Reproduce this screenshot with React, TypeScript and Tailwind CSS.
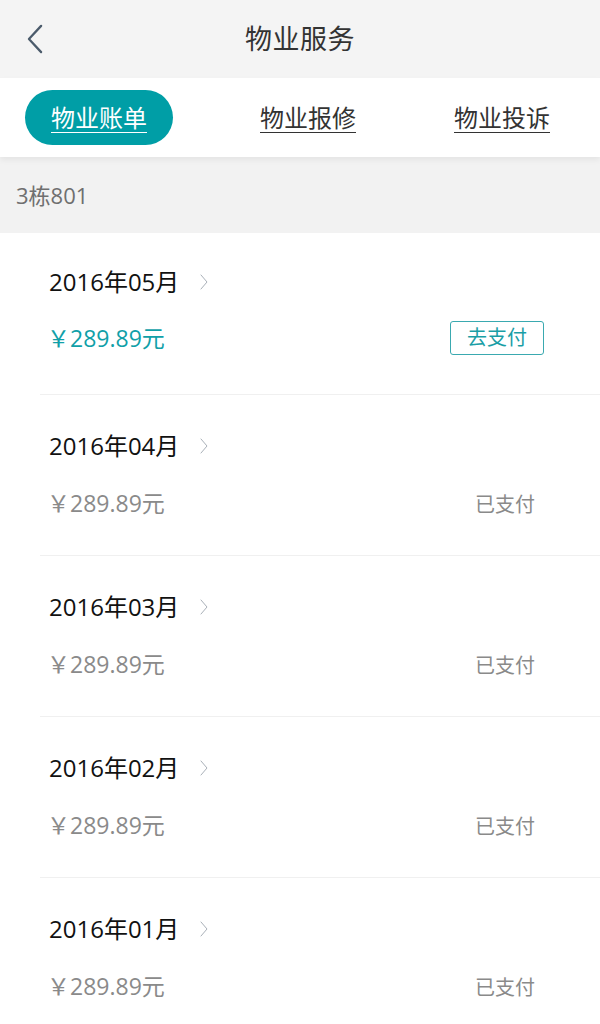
const FONT = "font-['Open_Sans','Noto_Sans_CJK_SC',sans-serif]";

interface Bill {
  month: string;
  amount: string;
  paid: boolean;
}

const BILLS: Bill[] = [
  { month: "2016年05月", amount: "289.89", paid: false },
  { month: "2016年04月", amount: "289.89", paid: true },
  { month: "2016年03月", amount: "289.89", paid: true },
  { month: "2016年02月", amount: "289.89", paid: true },
  { month: "2016年01月", amount: "289.89", paid: true },
];

function Chevron({ dir, className }: { dir: "left" | "right"; className?: string }) {
  return (
    <svg viewBox="0 0 20 32" className={className} fill="none">
      {dir === "left" ? (
        <polyline points="16,2 3,16 16,30" stroke="currentColor" strokeWidth="2.4" strokeLinecap="round" strokeLinejoin="round" />
      ) : (
        <polyline points="4,2 16,16 4,30" stroke="currentColor" strokeWidth="2" strokeLinecap="round" strokeLinejoin="round" />
      )}
    </svg>
  );
}

export default function App() {
  return (
    <main className={`min-h-screen bg-white ${FONT}`}>
      {/* 顶栏 */}
      <header className="h-[78px] bg-[#f4f4f4] grid grid-cols-[80px_1fr_80px] items-center">
        <button type="button" className="pl-[26px] text-[#4b5b6b]">
          <Chevron dir="left" className="w-[19px] h-[30px]" />
        </button>
        <h1 className="text-center text-[27px] text-[#333] tracking-[0.5px]">物业服务</h1>
        <span />
      </header>

      {/* 标签栏 */}
      <nav className="relative z-10 h-[79px] bg-white flex items-center pl-[25px] shadow-[0_3px_6px_rgba(0,0,0,0.06)]">
        <span className="w-[148px] h-[55px] rounded-full bg-[#009ea6] flex items-center justify-center text-white text-[24px] underline underline-offset-[5px] decoration-1">
          物业账单
        </span>
        <span className="ml-[87px] text-[24px] text-[#333] underline underline-offset-[5px] decoration-1">物业报修</span>
        <span className="ml-[98px] text-[24px] text-[#333] underline underline-offset-[5px] decoration-1">物业投诉</span>
      </nav>

      {/* 房号 */}
      <div className="h-[76px] bg-[#f2f2f2] flex items-center pl-[16px] text-[22px] text-[#6f6f6f]">3栋801</div>

      {/* 账单列表 */}
      <ul className="ml-10">
        {BILLS.map((bill, i) => (
          <li
            key={bill.month}
            className={`h-[161px] pl-[9px] pr-[56px] flex flex-col ${i > 0 ? "pt-[35px] border-t border-[#f0f0f0]" : "pt-[33px]"}`}
          >
            <div className="h-[32px] flex items-center gap-[20px] text-[24px] text-[#111]">
              <span>{bill.month}</span>
              <Chevron dir="right" className="w-[10px] h-[16px] text-[#a9b0b8]" />
            </div>
            <div className={`h-[34px] flex items-center justify-between ${i > 0 ? "mt-[24px]" : "mt-[23px]"}`}>
              <span className={`-ml-[2px] text-[23px] ${bill.paid ? "text-[#8a8a8a]" : "text-[#10a0a8]"}`}>
                ￥{bill.amount}元
              </span>
              {bill.paid ? (
                <span className="mr-[9px] mt-[3px] text-[20px] text-[#8a8a8a]">已支付</span>
              ) : (
                <button
                  type="button"
                  className="w-[94px] h-[34px] rounded-[3px] border border-[#3aa9b0] text-[20px] text-[#1a9ea6] flex items-center justify-center"
                >
                  去支付
                </button>
              )}
            </div>
          </li>
        ))}
      </ul>
    </main>
  );
}
